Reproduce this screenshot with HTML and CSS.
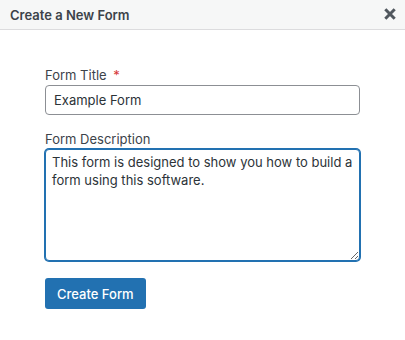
FILE: index.html
```
<!DOCTYPE html>
<html lang="en">
<head>
<meta charset="utf-8">
<title>Create a New Form</title>
<link rel="stylesheet" href="styles.css">
</head>
<body>
<div class="modal">
  <div class="modal-header">
    <h1 class="modal-title">Create a New Form</h1>
    <button class="close" aria-label="Close">
      <svg width="12" height="12" viewBox="0 0 12 12"><path d="M1.3 1.3 L10.7 10.7 M10.7 1.3 L1.3 10.7" stroke="#50575e" stroke-width="3" stroke-linecap="butt"/></svg>
    </button>
  </div>
  <form class="modal-body">
    <div class="field">
      <label class="label" for="title">Form Title <span class="req">*</span></label>
      <input class="input" id="title" type="text" value="Example Form">
    </div>
    <div class="field field-last">
      <label class="label" for="desc">Form Description</label>
      <textarea class="textarea" id="desc">This form is designed to show you how to build a form using this software.</textarea>
    </div>
    <div class="actions">
      <button type="button" class="btn-primary">Create Form</button>
    </div>
  </form>
</div>
</body>
</html>
```
FILE: styles.css
```
html, body {
  margin: 0;
  padding: 0;
  background: #fff;
}
body {
  font-family: Inter, "Noto Sans", "Liberation Sans", sans-serif;
  color: #3c434a;
  width: 405px;
  height: 340px;
  overflow: hidden;
}
.modal-header {
  height: 29px;
  background: #f6f7f7;
  border-bottom: 1px solid #dcdcde;
  display: flex;
  align-items: center;
  justify-content: space-between;
  padding: 0 9px 0 10px;
}
.modal-title {
  margin: 0;
  font-size: 13px;
  font-weight: 600;
  color: #3c434a;
}
.close {
  border: 0;
  background: none;
  padding: 0;
  width: 12px;
  height: 12px;
  display: flex;
  margin-top: -2px;
}
.modal-body {
  padding: 36px 45px 0 45px;
  display: flex;
  flex-direction: column;
}
.field {
  display: flex;
  flex-direction: column;
  margin-bottom: 15px;
}
.field-last {
  margin-bottom: 17px;
}
.label {
  font-size: 13px;
  line-height: 18px;
  margin-bottom: 1px;
  color: #3c434a;
}
.req {
  color: #d63638;
  margin-left: 3px;
}
.input {
  box-sizing: border-box;
  height: 30px;
  border: 1px solid #8c8f94;
  border-radius: 4px;
  padding: 0 8px;
  font-family: inherit;
  font-size: 13px;
  color: #2c3338;
  outline: none;
}
.textarea {
  box-sizing: border-box;
  height: 112px;
  border: 1px solid #2271b1;
  box-shadow: 0 0 0 1px #2271b1;
  border-radius: 4px;
  padding: 3px 6px;
  font-family: inherit;
  font-size: 13px;
  line-height: 18px;
  color: #2c3338;
  outline: none;
  resize: vertical;
}
.actions {
  display: flex;
}
.btn-primary {
  background: #2271b1;
  color: #fff;
  border: 0;
  border-radius: 3px;
  height: 31px;
  padding: 0 12px;
  font-family: inherit;
  font-size: 13px;
  font-weight: 500;
}
```
